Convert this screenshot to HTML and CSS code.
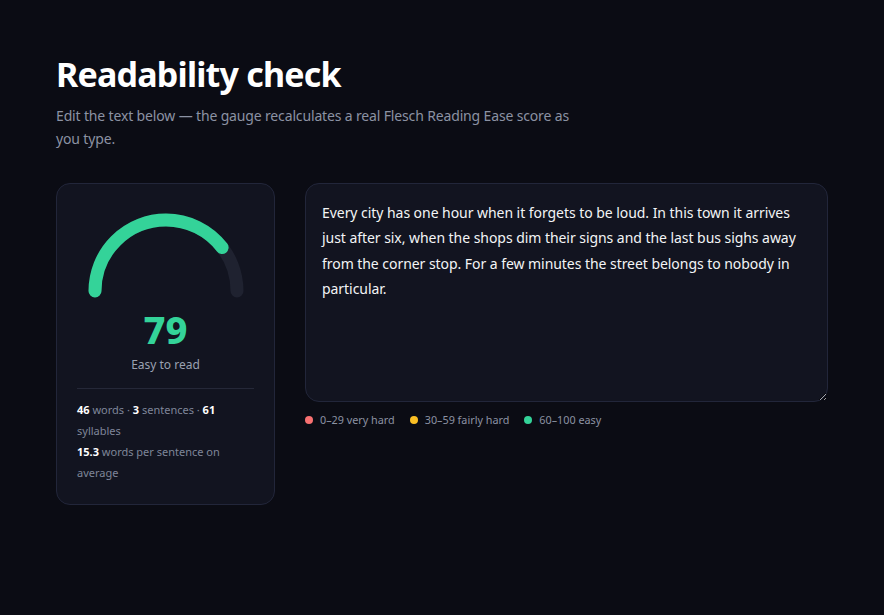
FILE: index.html
```html
<!DOCTYPE html>
<html lang="en">
<head>
<meta charset="utf-8">
<title>Readability check</title>
<link rel="stylesheet" href="styles.css">
</head>
<body>
<main class="page">
  <h1 class="title">Readability check</h1>
  <p class="lead">Edit the text below — the gauge recalculates a real Flesch Reading Ease score as you type.</p>
  <div class="layout">
    <section class="card">
      <svg class="gauge" viewBox="0 0 160 100" width="160" height="100">
        <path d="M 9 88 A 71 71 0 0 1 151 88" class="track"/>
        <path d="M 9 88 A 71 71 0 0 1 151 88" class="fill" pathLength="100" stroke-dasharray="79 100"/>
      </svg>
      <div class="score">79</div>
      <div class="verdict">Easy to read</div>
      <hr class="divider">
      <p class="stats"><b>46</b> words · <b>3</b> sentences · <b>61</b> syllables<br><b>15.3</b> words per sentence on average</p>
    </section>
    <section class="editor">
      <textarea class="text" spellcheck="false">Every city has one hour when it forgets to be loud. In this town it arrives just after six, when the shops dim their signs and the last bus sighs away from the corner stop. For a few minutes the street belongs to nobody in particular.</textarea>
      <div class="legend">
        <span class="item"><i class="dot red"></i>0–29 very hard</span>
        <span class="item"><i class="dot amber"></i>30–59 fairly hard</span>
        <span class="item"><i class="dot green"></i>60–100 easy</span>
      </div>
    </section>
  </div>
</main>
</body>
</html>
```
FILE: styles.css
```css
* { box-sizing: border-box; }
html, body { margin: 0; background: #0b0c14; }
body {
  font-family: "Noto Sans", "Open Sans", sans-serif;
  color: #e5e7eb;
}
.page {
  padding: 52px 56px 40px;
}
.title {
  margin: 0;
  font-size: 34px;
  font-weight: 700;
  color: #ffffff;
  line-height: 44px;
  letter-spacing: -0.8px;
}
.lead {
  margin: 8px 0 0;
  max-width: 522px;
  font-size: 14px;
  line-height: 23px;
  letter-spacing: -0.15px;
  color: #8b92a3;
}
.layout {
  margin-top: 33px;
  display: flex;
  gap: 30px;
  align-items: flex-start;
}
.card {
  width: 219px;
  flex: none;
  background: #121420;
  border: 1px solid #22263a;
  border-radius: 14px;
  padding: 19px 20px 21px;
  display: flex;
  flex-direction: column;
  align-items: center;
}
.gauge { display: block; }
.track, .fill {
  fill: none;
  stroke-width: 13;
  stroke-linecap: round;
}
.track { stroke: #1f2230; }
.fill { stroke: #34d399; }
.score {
  margin-top: 4px;
  font-size: 38px;
  line-height: 44px;
  font-weight: 800;
  color: #34d399;
}
.verdict {
  margin-top: 5px;
  font-size: 12px;
  line-height: 18px;
  color: #9aa1b1;
}
.divider {
  width: 100%;
  margin: 14px 0 10px;
  border: 0;
  border-top: 1px solid #252838;
}
.stats {
  align-self: stretch;
  margin: 0;
  font-size: 11px;
  line-height: 21px;
  color: #7f8699;
}
.stats b { color: #ffffff; font-weight: 700; }
.editor {
  flex: 1;
  min-width: 0;
}
.text {
  display: block;
  width: 100%;
  height: 219px;
  margin: 0;
  padding: 16px 16px 14px;
  background: #121420;
  border: 1px solid #22263a;
  border-radius: 14px;
  color: #f3f4f6;
  font-family: inherit;
  font-size: 14px;
  line-height: 25.3px;
  letter-spacing: -0.05px;
  outline: none;
  resize: vertical;
}
.legend {
  margin-top: 10px;
  display: flex;
  gap: 15px;
  font-size: 10.8px;
  color: #8b92a3;
}
.item { display: inline-flex; align-items: center; gap: 7px; }
.dot { width: 8px; height: 8px; border-radius: 50%; display: inline-block; }
.red { background: #f87171; }
.amber { background: #fbbf24; }
.green { background: #34d399; }
```
